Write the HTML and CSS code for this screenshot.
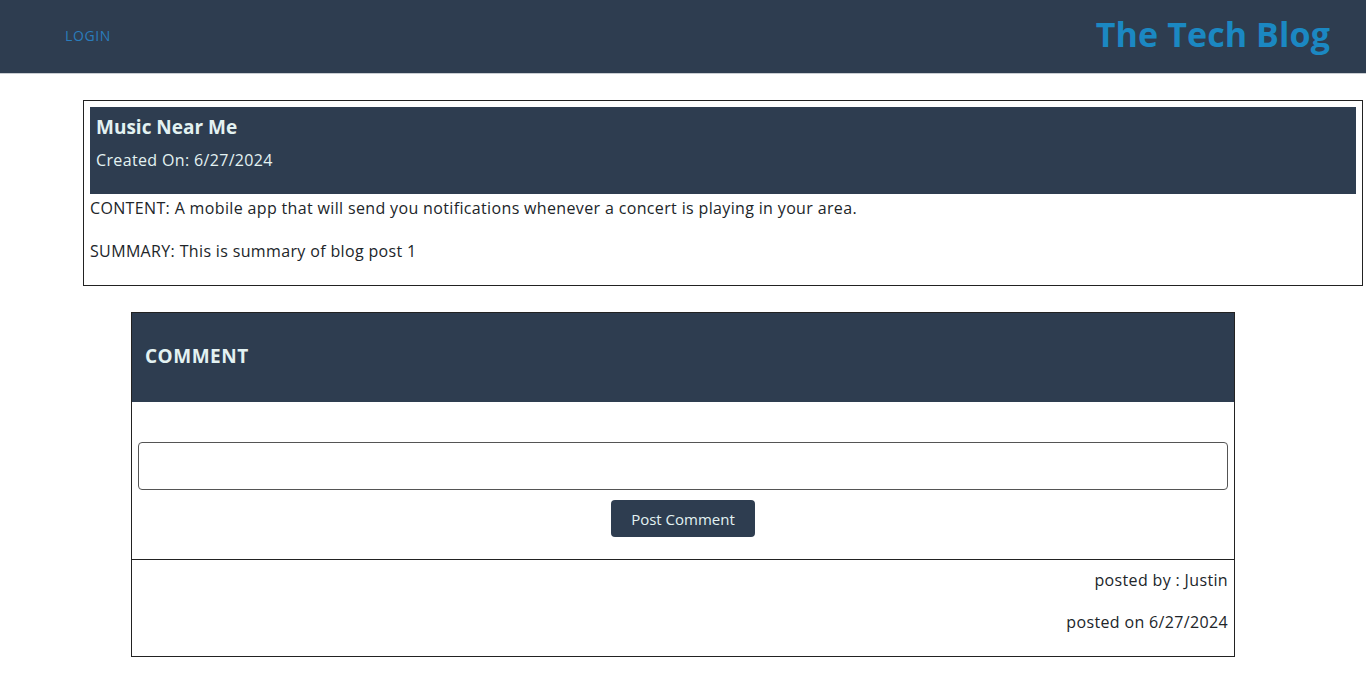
FILE: index.html
```html
<!DOCTYPE html>
<html>
<head>
<meta charset="utf-8">
<link rel="stylesheet" href="styles.css">
</head>
<body>
<header class="topbar">
  <a class="login" href="#">LOGIN</a>
  <h1 class="brand">The Tech Blog</h1>
</header>
<main>
  <section class="post">
    <div class="post-head">
      <h2 class="post-title">Music Near Me</h2>
      <p class="post-date">Created On: 6/27/2024</p>
    </div>
    <p class="post-text">CONTENT: A mobile app that will send you notifications whenever a concert is playing in your area.</p>
    <p class="post-text">SUMMARY: This is summary of blog post 1</p>
  </section>
  <section class="comments">
    <div class="comments-head"><h3>COMMENT</h3></div>
    <form class="comment-form">
      <input class="comment-input" type="text">
      <button class="btn" type="button">Post Comment</button>
    </form>
    <div class="comment">
      <p>posted by : Justin</p>
      <p>posted on 6/27/2024</p>
    </div>
  </section>
</main>
</body>
</html>
```
FILE: styles.css
```css
* { box-sizing: border-box; }
body {
  margin: 0;
  font-family: "Open Sans", "Noto Sans", sans-serif;
  font-size: 16px;
  letter-spacing: 0.35px;
  color: #212529;
  background: #fff;
}
.topbar {
  height: 74px;
  background: #2e3d50;
  border-bottom: 1px solid #c9cdd2;
  display: flex;
  align-items: center;
  justify-content: space-between;
  padding: 0 36px 0 65px;
}
.login {
  color: #2a7cbc;
  text-decoration: none;
  font-size: 14px;
  letter-spacing: 0.6px;
  margin-bottom: 2px;
}
.brand {
  margin: 0 0 6px;
  color: #1b88c2;
  font-size: 34px;
  font-weight: 700;
  letter-spacing: 0.1px;
}
.post {
  margin: 26px 3px 0 83px;
  border: 1px solid #222;
  padding: 6px 6px 22px 6px;
}
.post-head {
  background: #2e3d50;
  color: #e3f2f2;
  padding: 8px 6px 22px;
}
.post-title {
  margin: 0;
  font-size: 19px;
  font-weight: 700;
  line-height: 24px;
  letter-spacing: 0;
}
.post-date {
  margin: 9px 0 0;
  line-height: 24px;
}
.post-text {
  margin: 2px 0 19px;
  line-height: 24px;
}
.post-text + .post-text { margin-bottom: 0; }
.comments {
  width: 1104px;
  margin: 26px auto 0;
  border: 1px solid #222;
}
.comments-head {
  background: #2e3d50;
  height: 89px;
  display: flex;
  align-items: center;
  padding: 0 13px 4px;
}
.comments-head h3 {
  margin: 0;
  color: #e3f2f2;
  font-size: 19px;
  font-weight: 700;
  letter-spacing: 0.5px;
}
.comment-form {
  display: flex;
  flex-direction: column;
  align-items: center;
  gap: 10px;
  padding: 40px 6px 22px;
  border-bottom: 1px solid #222;
}
.comment-input {
  width: 100%;
  height: 48px;
  border: 1px solid #555;
  border-radius: 4px;
}
.btn {
  background: #2e3d50;
  color: #e3f2f2;
  border: 0;
  border-radius: 4px;
  height: 37px;
  padding: 0 20px;
  font-family: inherit;
  font-size: 15px;
  letter-spacing: 0;
}
.comment {
  text-align: right;
  padding: 8px 6px 22px;
}
.comment p {
  margin: 0 0 18px;
  line-height: 24px;
}
.comment p:last-child { margin-bottom: 0; }
```
